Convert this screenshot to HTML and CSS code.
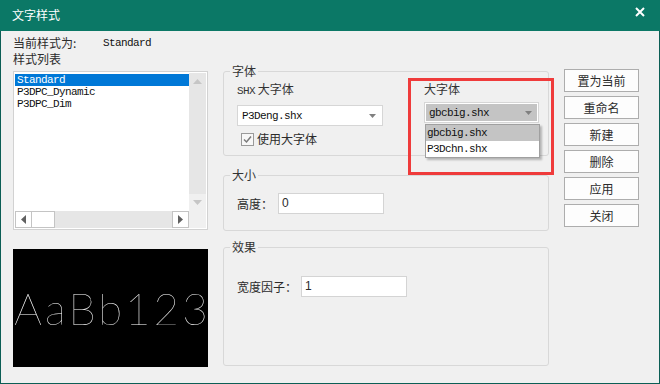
FILE: index.html
```html
<!DOCTYPE html>
<html lang="zh-CN">
<head>
  <meta charset="utf-8" />
  <title>文字样式</title>
  <link rel="stylesheet" href="styles.css">
</head>
<body>
  <div class="window">
    <div class="titlebar">
      <span class="title">文字样式</span>
      <svg class="close" width="10" height="10" viewBox="0 0 10 10"><path d="M1 1 L9 9 M9 1 L1 9" stroke="#fff" stroke-width="2"/></svg>
    </div>
    <div class="content">
      <div class="col-left">
        <div class="current"><span class="current-label">当前样式为:</span><span class="mono">Standard</span></div>
        <div class="list-label">样式列表</div>
        <div class="listbox">
          <div class="list-main">
            <ul class="list-items mono">
              <li class="selected">Standard</li>
              <li>P3DPC_Dynamic</li>
              <li>P3DPC_Dim</li>
            </ul>
            <div class="vscroll">
              <div class="vbtn"><svg width="9" height="5" viewBox="0 0 9 5"><path d="M0 5 L4.5 0 L9 5 Z" fill="#c6c6c6"/></svg></div>
              <div class="vtrack"></div>
              <div class="vbtn vbtn-down"><svg width="9" height="5" viewBox="0 0 9 5"><path d="M0 0 L4.5 5 L9 0 Z" fill="#c6c6c6"/></svg></div>
            </div>
          </div>
          <div class="hscroll">
            <div class="hbtn"><svg width="5" height="9" viewBox="0 0 5 9"><path d="M5 0 L0 4.5 L5 9 Z" fill="#606060"/></svg></div>
            <div class="hthumb"></div>
            <div class="htrack"></div>
            <div class="hbtn"><svg width="5" height="9" viewBox="0 0 5 9"><path d="M0 0 L5 4.5 L0 9 Z" fill="#606060"/></svg></div>
            <div class="corner"></div>
          </div>
        </div>
        <div class="preview"><span class="preview-text">AaBb123</span></div>
      </div>

      <div class="col-mid">
        <fieldset class="group group-font">
          <legend>字体</legend>
          <div class="font-row">
            <div class="font-part">
              <div class="field-label"><span class="mono">SHX</span> 大字体</div>
              <div class="combo">
                <span class="mono">P3Deng.shx</span>
                <svg width="7" height="4" viewBox="0 0 7 4"><path d="M0 0 L3.5 4 L7 0 Z" fill="#808080"/></svg>
              </div>
              <label class="check">
                <svg width="13" height="13" viewBox="0 0 13 13"><rect x="0.5" y="0.5" width="12" height="12" fill="#f7f7f7" stroke="#9a9a9a"/><path d="M3 6.5 L5.5 9 L10 3.5" fill="none" stroke="#7a7a7a" stroke-width="1.5"/></svg>
                使用大字体
              </label>
            </div>
            <div class="font-part font-part-big">
              <div class="field-label">大字体</div>
              <div class="combo combo-open">
                <span class="mono">gbcbig.shx</span>
                <svg width="7" height="4" viewBox="0 0 7 4"><path d="M0 0 L3.5 4 L7 0 Z" fill="#808080"/></svg>
                <ul class="dropdown mono">
                  <li class="hover">gbcbig.shx</li>
                  <li>P3Dchn.shx</li>
                </ul>
              </div>
            </div>
          </div>
        </fieldset>

        <fieldset class="group group-size">
          <legend>大小</legend>
          <div class="input-row">
            <span class="input-label">高度：</span>
            <div class="input">0</div>
          </div>
        </fieldset>

        <fieldset class="group group-effect">
          <legend>效果</legend>
          <div class="input-row">
            <span class="input-label wide">宽度因子：</span>
            <div class="input">1</div>
          </div>
        </fieldset>
      </div>

      <div class="col-right">
        <button>置为当前</button>
        <button>重命名</button>
        <button>新建</button>
        <button>删除</button>
        <button>应用</button>
        <button>关闭</button>
      </div>
    </div>
    <div class="highlight"></div>
  </div>
</body>
</html>
```

FILE: styles.css
```css
body {
  margin: 0;
  font-family: "Noto Sans CJK SC", sans-serif;
  font-size: 12px;
  color: #2b2b2b;
  background: #f0f0f0;
}

.window {
  position: relative;
  width: 660px;
  height: 384px;
  box-sizing: border-box;
  background: #f0f0f0;
  border: 1px solid #0c5e55;
  border-top: none;
}

.titlebar {
  height: 31px;
  margin: 0 -1px;
  background: #0b7866;
  color: #fff;
  display: flex;
  align-items: center;
  justify-content: space-between;
  padding: 0 15px 6px 12px;
  box-sizing: border-box;
}

.title {
  font-size: 12px;
  line-height: 14px;
  margin-top: 4px;
}

.close {
  margin-bottom: 2px;
}

.mono {
  font-family: "Liberation Mono", monospace;
  font-size: 11px;
  letter-spacing: -0.6px;
  color: #111;
}

.content {
  display: flex;
  padding-left: 12px;
}

.col-left {
  width: 195px;
  padding-top: 4px;
}

.current {
  display: flex;
  line-height: 16px;
}

.current-label {
  width: 90px;
}

.list-label {
  line-height: 16px;
  margin-bottom: 4px;
}

.listbox {
  border: 1px solid #d2d2d2;
  background: #fff;
  padding: 1px;
  height: 159px;
  box-sizing: border-box;
}

.list-main {
  display: flex;
  height: 138px;
}

.list-items {
  list-style: none;
  margin: 0;
  padding: 1px 0 0;
  flex: 1;
}

.list-items li {
  height: 12px;
  line-height: 12px;
  padding-left: 2px;
}

.list-items li.selected {
  background: #0078d7;
  color: #fff;
}

.vscroll {
  width: 17px;
  display: flex;
  flex-direction: column;
  background: #e6e6e6;
}

.vbtn {
  height: 17px;
  display: flex;
  align-items: center;
  justify-content: center;
}

.vbtn-down {
  background: #f0f0f0;
}

.vtrack {
  flex: 1;
}

.hscroll {
  display: flex;
  height: 17px;
  background: #e6e6e6;
}

.hbtn, .hthumb {
  background: #fff;
  border: 1px solid #c4c4c4;
  box-sizing: border-box;
  display: flex;
  align-items: center;
  justify-content: center;
}

.hbtn {
  width: 17px;
}

.hthumb {
  width: 23px;
  border-left: none;
}

.htrack {
  flex: 1;
}

.corner {
  width: 17px;
  background: #f0f0f0;
}

.preview {
  margin-top: 19px;
  height: 118px;
  background: #000;
  display: flex;
  align-items: center;
  justify-content: center;
}

.preview-text {
  color: #fff;
  font-family: Lato, sans-serif;
  font-weight: 100;
  font-size: 44px;
  letter-spacing: 3px;
  margin-right: -3px;
  will-change: transform;
}

.col-mid {
  width: 326px;
  margin-left: 15px;
  padding-top: 33px;
}

.group {
  margin: 0;
  padding: 0 0 0 13px;
  border: 1px solid #d8d8d8;
  border-radius: 3px;
  min-width: 0;
  box-sizing: border-box;
}

.group legend {
  padding: 0 2px;
  margin-left: -7px;
  line-height: 14px;
  font-size: 12px;
  color: #333;
}

.group-font {
  height: 92px;
  padding-top: 3px;
}

.group-size {
  height: 63px;
  margin-top: 12px;
  padding-top: 11px;
}

.group-effect {
  height: 126px;
  margin-top: 9px;
  padding-top: 22px;
}

.font-row {
  display: flex;
}

.font-part {
  width: 146px;
}

.font-part-big {
  width: 115px;
  margin-left: 41px;
}

.field-label {
  line-height: 16px;
  color: #333;
}

.field-label .mono {
  color: #333;
}

.combo {
  position: relative;
  height: 21px;
  margin-top: 6px;
  box-sizing: border-box;
  border: 1px solid #d6d6d6;
  background: #fff;
  display: flex;
  align-items: center;
  justify-content: space-between;
  padding: 0 6px 0 4px;
}

.combo-open {
  margin-top: 5px;
  background: #c4c4c4;
  box-shadow: inset 0 0 0 1px #fff;
}

.dropdown {
  position: absolute;
  top: 21px;
  left: 0;
  width: 115px;
  margin: 0;
  padding: 0;
  list-style: none;
  background: #fff;
  border: 1px solid #a0a0a0;
  box-sizing: border-box;
  box-shadow: 2px 2px 2px rgba(0, 0, 0, 0.25);
}

.dropdown li {
  height: 16px;
  line-height: 16px;
  padding-left: 1px;
}

.dropdown li.hover {
  background: #c4c4c4;
}

.check {
  display: flex;
  align-items: center;
  gap: 3px;
  margin: 5px 0 0 4px;
  line-height: 16px;
}

.input-row {
  display: flex;
  align-items: center;
}

.input-label {
  width: 41px;
}

.input-label.wide {
  width: 64px;
}

.input {
  width: 106px;
  height: 21px;
  box-sizing: border-box;
  border: 1px solid #d4d4d4;
  background: #fff;
  font-family: "Liberation Sans", sans-serif;
  font-size: 12px;
  line-height: 19px;
  padding-left: 3px;
}

.col-right {
  width: 75px;
  margin-left: 15px;
  padding-top: 38px;
  display: flex;
  flex-direction: column;
  gap: 4px;
}

button {
  height: 23px;
  padding: 0;
  background: #fdfdfd;
  border: 1px solid #adadad;
  font-family: "Noto Sans CJK SC", sans-serif;
  font-size: 12px;
  color: #2b2b2b;
}

.highlight {
  position: absolute;
  left: 407px;
  top: 78px;
  width: 146px;
  height: 97px;
  border: 3px solid #ef3b3b;
  box-sizing: border-box;
}
```
